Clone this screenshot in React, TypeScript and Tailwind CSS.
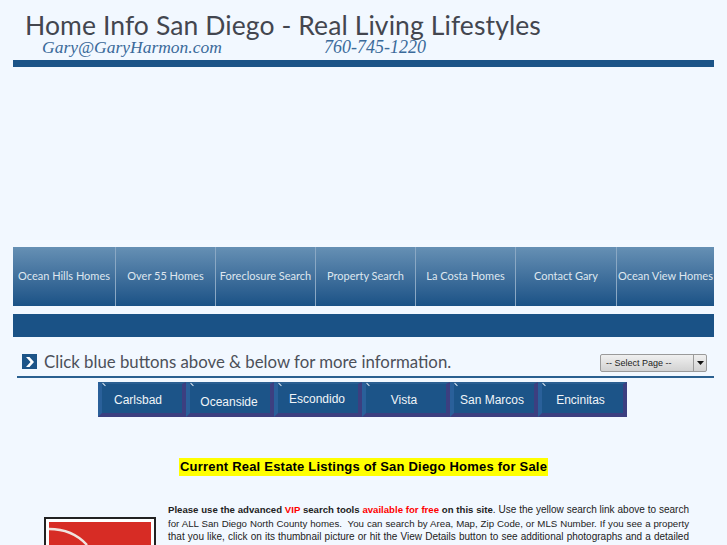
const navItems = [
  { label: 'Ocean Hills Homes', width: 'w-[102px]' },
  { label: 'Over 55 Homes', width: 'w-[100px] border-l border-[#8aa8c4]' },
  { label: 'Foreclosure Search', width: 'w-[100px] border-l border-[#8aa8c4]' },
  { label: 'Property Search', width: 'w-[100px] border-l border-[#8aa8c4]' },
  { label: 'La Costa Homes', width: 'w-[100px] border-l border-[#8aa8c4]' },
  { label: 'Contact Gary', width: 'w-[101px] border-l border-[#8aa8c4]' },
  { label: 'Ocean View Homes', width: 'flex-1 border-l border-[#8aa8c4]' },
];

const cityItems = [
  { label: 'Carlsbad', width: 'w-[88px]', offset: 'pt-[3px] pr-[8px]' },
  { label: 'Oceanside', width: 'w-[88px]', offset: 'pt-[7px] pr-[2px]' },
  { label: 'Escondido', width: 'w-[88px]', offset: 'pr-[2px]' },
  { label: 'Vista', width: 'w-[88px]', offset: 'pt-[3px] pr-[4px]' },
  { label: 'San Marcos', width: 'w-[88px]', offset: 'pt-[3px] pr-[4px]' },
  { label: 'Encinitas', width: 'w-[89px]', offset: 'pt-[3px] pr-[4px]' },
];

function CityButton({ label, width, offset }: { label: string; width: string; offset: string }) {
  return (
    <div className={`${width} h-[35px] relative bg-[#1c5488] border-l-[4px] border-r-[4px] border-b-[4px] border-t-[2px] border-l-[#2a609a] border-r-[#3c3f80] border-b-[#3c3f80] border-t-[#2a5f92] flex items-center justify-center ${offset}`}>
      <span className="absolute left-0 top-0 w-[4px] h-px rotate-45 bg-[#dfe8f2]" />
      <span className="text-[12px] text-[#f0f4f8] font-['Liberation_Sans',sans-serif]">{label}</span>
    </div>
  );
}

export default function App() {
  return (
    <div className="w-[727px] h-[545px] overflow-hidden bg-[#f2f8ff] font-['Liberation_Sans',sans-serif]">
      <header className="mx-[13px] h-[67px] flex flex-col">
        <div className="h-[60px]">
          <h1 className="pl-[12px] pt-[12px] text-[26.5px] leading-[26px] text-[#43464f] font-['Lato',sans-serif] whitespace-nowrap tracking-[0.1px]">
            Home Info San Diego - Real Living Lifestyles
          </h1>
          <div className="flex pl-[29px] text-[#3a6a9a] font-['Liberation_Serif',serif] italic leading-[18px]">
            <span className="w-[282px] text-[17.5px] whitespace-nowrap">Gary@GaryHarmon.com</span>
            <span className="text-[18px] whitespace-nowrap">760-745-1220</span>
          </div>
        </div>
        <div className="h-[7px] bg-[#1c5488]" />
      </header>

      <nav className="mx-[13px] mt-[180px] h-[59px] flex bg-gradient-to-b from-[#6690b4] to-[#1a5286]">
        {navItems.map((item) => (
          <div
            key={item.label}
            className={`flex items-center justify-center pb-px text-[11px] text-[#dfe7ef] font-['Lato',sans-serif] whitespace-nowrap ${item.width}`}
          >
            {item.label}
          </div>
        ))}
      </nav>

      <div className="mx-[13px] mt-[8px] h-[23px] bg-[#1a5286]" />

      <div className="ml-[22px] mr-[20px] mt-[17px] h-[18px] flex items-center">
        <div className="w-[15px] h-[15px] self-start bg-[#1c5488] flex items-center justify-center">
          <svg width="10" height="12" viewBox="0 0 10 12">
            <path d="M1 1h3.5L9 6l-4.5 5H1l4.5-5z" fill="#fff" />
          </svg>
        </div>
        <span className="ml-[7px] pb-[3px] text-[16.8px] text-[#4c5059] font-['Lato',sans-serif] whitespace-nowrap">
          Click blue buttons above &amp; below for more information.
        </span>
        <div className="ml-auto w-[107px] h-[18px] flex rounded-[2px] border border-[#9a9a9a] bg-gradient-to-b from-[#f0f0f0] to-[#d2d2d2] text-[9px] text-[#222]">
          <span className="flex-1 pl-[5px] leading-[16px] whitespace-nowrap">-- Select Page --</span>
          <span className="w-[13px] border-l border-[#9a9a9a] flex items-center justify-center">
            <svg width="7" height="4" viewBox="0 0 7 4">
              <path d="M0 0h7L3.5 4z" fill="#111" />
            </svg>
          </span>
        </div>
      </div>

      <div className="ml-[17px] mr-[13px] mt-[4px] h-[2px] bg-[#2a6090]" />

      <div className="mt-[4px] ml-[98px] flex">
        {cityItems.map((c) => (
          <CityButton key={c.label} {...c} />
        ))}
      </div>

      <div className="mt-[41px] flex justify-center">
        <h2 className="bg-[#ffff00] h-[18px] px-px text-[13px] leading-[17px] font-bold text-black tracking-[0.21px] whitespace-nowrap">
          Current Real Estate Listings of San Diego Homes for Sale
        </h2>
      </div>

      <div className="mt-[27px] flex items-start">
        <div className="ml-[44px] mt-[14px] w-[112px] h-[60px] border-2 border-[#222] bg-white p-[3px] shrink-0">
          <div className="w-full h-full bg-[#d72c25]">
            <svg width="100" height="23" viewBox="0 0 100 23">
              <path d="M0 7C14 7 28 12 38 23" fill="none" stroke="#f0e4df" strokeWidth="2.5" />
            </svg>
          </div>
        </div>
        <p className="ml-[12px] w-[521px] text-[10px] leading-[13.5px] text-[#222] whitespace-nowrap">
          <span className="block [text-align-last:justify]">
            <b className="text-[9.6px]">Please use the advanced <span className="text-[#ff0000]">VIP</span> search tools <span className="text-[#ff0000]">available for free</span> on this site</b>
            <span>. Use the yellow search link above to search</span>
          </span>
          <span className="block text-[9.7px] [text-align-last:justify]">
            for ALL San Diego North County homes.&nbsp; You can search by Area, Map, Zip Code, or MLS Number. If you see a property
          </span>
          <span className="block [text-align-last:justify]">
            that you like, click on its thumbnail picture or hit the View Details button to see additional photographs and a detailed
          </span>
        </p>
      </div>
    </div>
  );
}
